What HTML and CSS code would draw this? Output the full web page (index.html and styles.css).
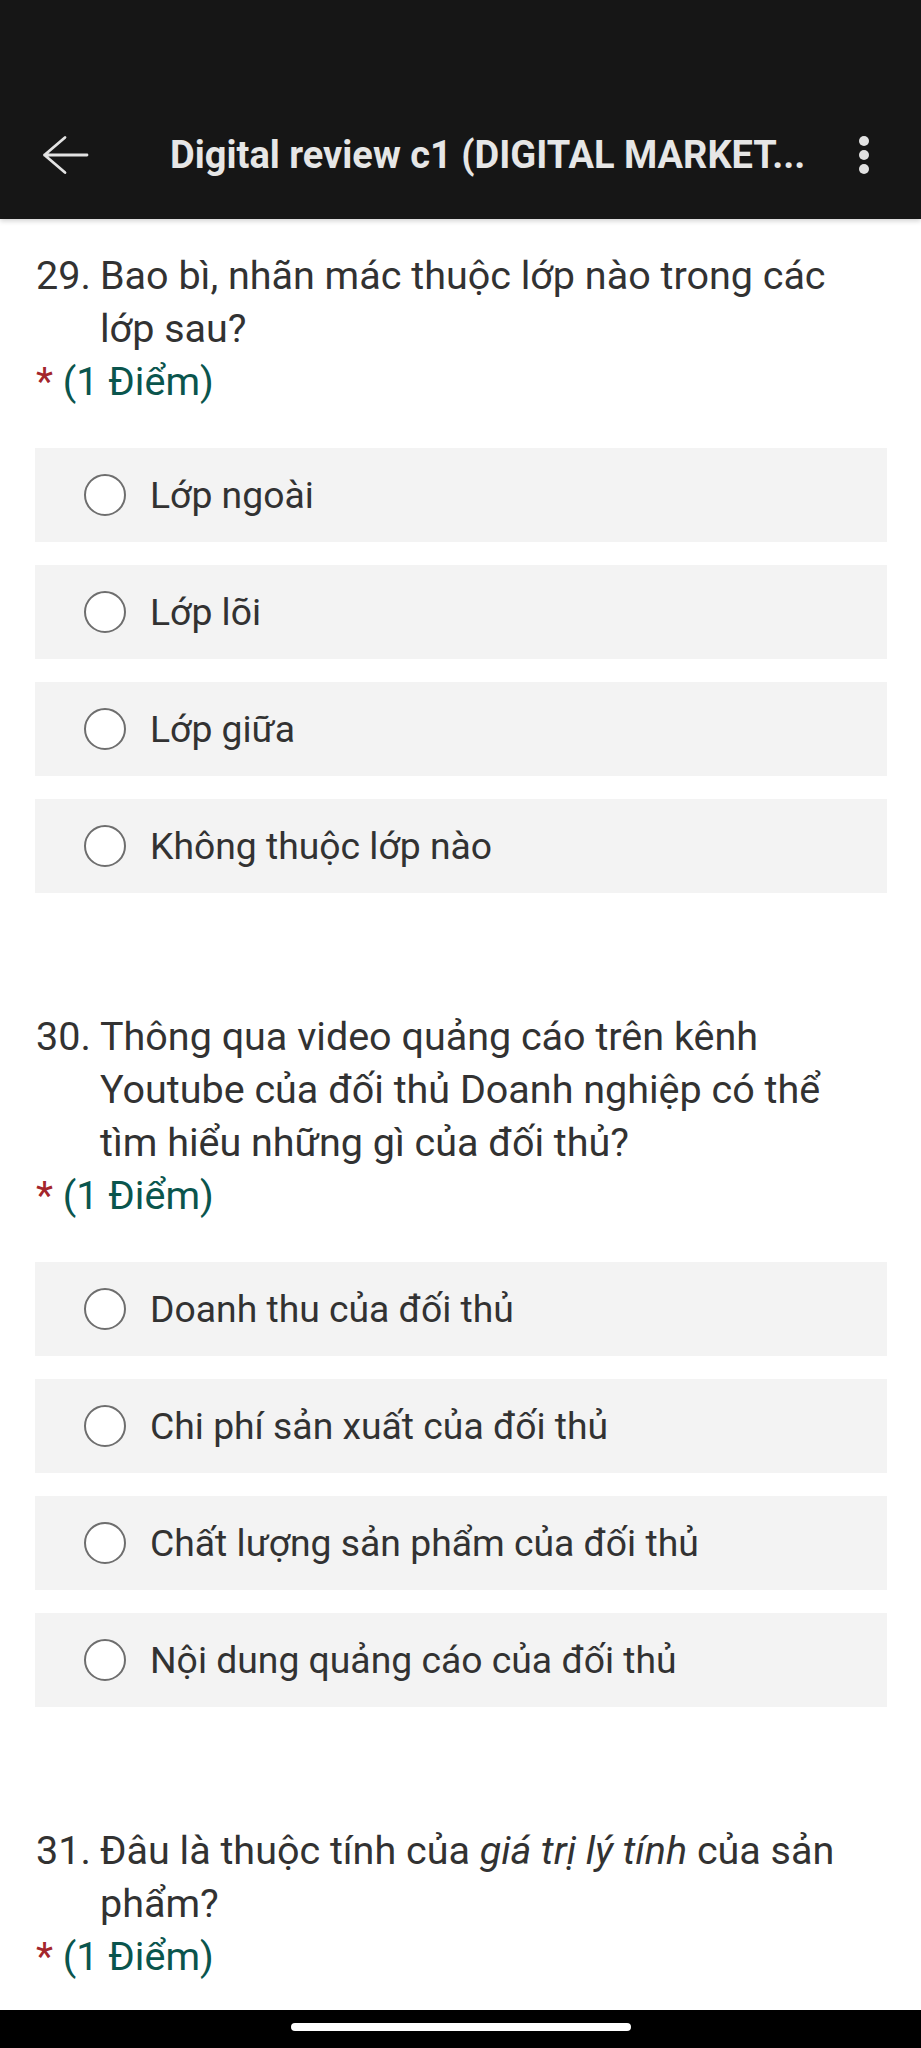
FILE: index.html
```html
<!DOCTYPE html>
<html lang="vi">
<head>
<meta charset="utf-8">
<title>Digital review c1</title>
<link rel="stylesheet" href="styles.css">
</head>
<body>
<div class="screen">
  <header class="appbar">
    <div class="toolbar">
      <svg class="back" width="47" height="40" viewBox="0 0 47 40" aria-hidden="true">
        <path d="M2.5 20 L23 2.5 M2.5 20 L23 37.5 M2.5 20 H45" fill="none" stroke="#e2e2e2" stroke-width="2.8" stroke-linecap="round" stroke-linejoin="round"/>
      </svg>
      <h1 class="title">Digital review c1 (DIGITAL MARKET...</h1>
      <svg class="more" width="12" height="40" viewBox="0 0 12 40" aria-hidden="true">
        <circle cx="6" cy="6" r="5" fill="#e2e2e2"/>
        <circle cx="6" cy="20" r="5" fill="#e2e2e2"/>
        <circle cx="6" cy="34" r="5" fill="#e2e2e2"/>
      </svg>
    </div>
  </header>

  <main class="content">
    <section class="question">
      <div class="q-text"><span class="q-num">29.</span><span class="q-body">Bao bì, nhãn mác thuộc lớp nào trong các<br>lớp sau?</span></div>
      <div class="points"><span class="req">*</span> (1 Điểm)</div>
      <div class="options">
        <div class="option"><span class="radio"></span><span class="opt-label">Lớp ngoài</span></div>
        <div class="option"><span class="radio"></span><span class="opt-label">Lớp lõi</span></div>
        <div class="option"><span class="radio"></span><span class="opt-label">Lớp giữa</span></div>
        <div class="option"><span class="radio"></span><span class="opt-label">Không thuộc lớp nào</span></div>
      </div>
    </section>

    <section class="question">
      <div class="q-text"><span class="q-num">30.</span><span class="q-body">Thông qua video quảng cáo trên kênh<br>Youtube của đối thủ Doanh nghiệp có thể<br>tìm hiểu những gì của đối thủ?</span></div>
      <div class="points"><span class="req">*</span> (1 Điểm)</div>
      <div class="options">
        <div class="option"><span class="radio"></span><span class="opt-label">Doanh thu của đối thủ</span></div>
        <div class="option"><span class="radio"></span><span class="opt-label">Chi phí sản xuất của đối thủ</span></div>
        <div class="option"><span class="radio"></span><span class="opt-label">Chất lượng sản phẩm của đối thủ</span></div>
        <div class="option"><span class="radio"></span><span class="opt-label">Nội dung quảng cáo của đối thủ</span></div>
      </div>
    </section>

    <section class="question">
      <div class="q-text"><span class="q-num">31.</span><span class="q-body">Đâu là thuộc tính của <em>giá trị lý tính</em> của sản<br>phẩm?</span></div>
      <div class="points"><span class="req">*</span> (1 Điểm)</div>
    </section>
  </main>

  <footer class="navbar"><span class="home-pill"></span></footer>
</div>
</body>
</html>
```

FILE: styles.css
```css
* { box-sizing: border-box; }

html, body {
  margin: 0;
  padding: 0;
  background: #ffffff;
}

body {
  font-family: Roboto, "Noto Sans", "Liberation Sans", sans-serif;
  color: #323232;
}

.screen {
  width: 921px;
  height: 2048px;
  display: flex;
  flex-direction: column;
  overflow: hidden;
}

.appbar {
  flex: none;
  height: 219px;
  padding-top: 92px;
  background: #161616;
  box-shadow: 0 2px 5px rgba(0, 0, 0, 0.18);
  position: relative;
  z-index: 1;
}

.toolbar {
  height: 126px;
  display: flex;
  align-items: center;
  padding-left: 42px;
  padding-right: 51px;
}

.back { flex: none; }

.title {
  flex: 1;
  margin: 0 0 0 81px;
  font-size: 38px;
  font-weight: 700;
  color: #e6e6e6;
  white-space: nowrap;
  letter-spacing: 0;
}

.more { flex: none; }

.content {
  flex: 1;
  overflow: hidden;
  padding: 30px 34px 0 35px;
}

.question + .question {
  margin-top: 117px;
}

.q-text {
  display: flex;
  font-size: 39.5px;
  line-height: 53px;
  color: #323232;
}

.q-num {
  flex: none;
  width: 65px;
  padding-left: 1px;
  white-space: nowrap;
}

.q-body {
  white-space: nowrap;
}

.q-body em { font-style: italic; }

.points {
  font-size: 39.5px;
  line-height: 53px;
  color: #0a554d;
  padding-left: 1px;
}

.req { color: #a4262c; }

.options {
  margin-top: 40px;
  display: flex;
  flex-direction: column;
  gap: 23px;
}

.option {
  height: 94px;
  background: #f3f3f3;
  display: flex;
  align-items: center;
  padding-left: 49px;
}

.radio {
  flex: none;
  width: 42px;
  height: 42px;
  border-radius: 50%;
  border: 2.6px solid #6e6e6e;
  background: #ffffff;
}

.opt-label {
  margin-left: 24px;
  font-size: 37.3px;
  color: #323232;
  white-space: nowrap;
}

.navbar {
  flex: none;
  height: 38px;
  background: #000000;
  display: flex;
  justify-content: center;
  padding-top: 13px;
}

.home-pill {
  width: 340px;
  height: 8px;
  border-radius: 4px;
  background: #ffffff;
  margin-left: 1px;
}
```
